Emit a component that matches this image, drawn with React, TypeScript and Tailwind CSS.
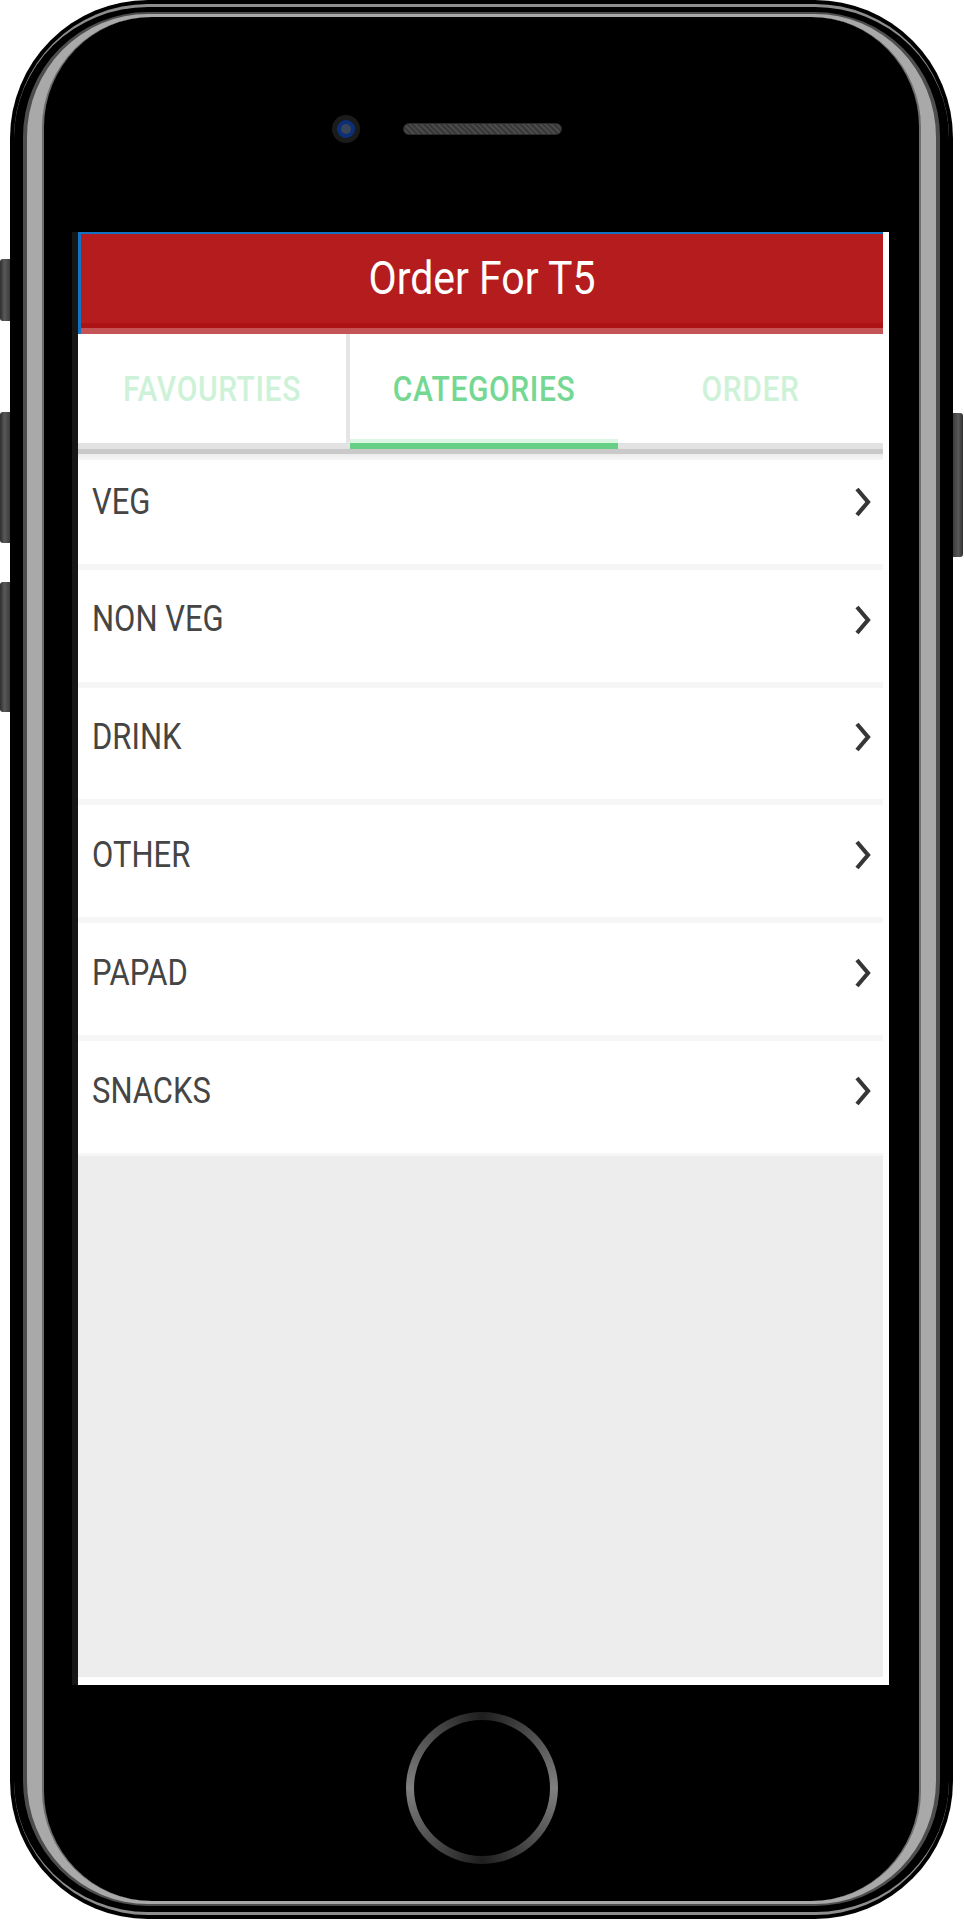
import React from 'react';

const tabs = ['FAVOURTIES', 'CATEGORIES', 'ORDER'];
const categories = ['VEG', 'NON VEG', 'DRINK', 'OTHER', 'PAPAD', 'SNACKS'];

function Chevron() {
  return (
    <svg width="20" height="34" viewBox="0 0 20 34" fill="none">
      <path d="M4 4 L15 17 L4 30" stroke="#363636" strokeWidth="4.2" strokeLinejoin="miter" />
    </svg>
  );
}

function Tabs() {
  return (
    <div className="relative flex h-[115px]">
      <div className="flex w-[272px] items-center justify-center border-b-[6px] border-r-[4px] border-b-[#e2e2e2] border-r-[#e5e5e5] text-[#cdf2d8]">
        <span className="inline-block scale-y-[1.15] text-[30px] font-medium tracking-[0.6px]">{tabs[0]}</span>
      </div>
      <div className="flex w-[268px] items-center justify-center border-b-[6px] border-[#66cf86] text-[#74d892] shadow-[inset_0_-4px_0_#dbf6e3]">
        <span className="inline-block scale-y-[1.15] text-[30px] font-medium tracking-[0.6px]">{tabs[1]}</span>
      </div>
      <div className="flex flex-1 items-center justify-center border-b-[6px] border-[#e2e2e2] text-[#cdf2d8]">
        <span className="inline-block scale-y-[1.15] text-[30px] font-medium tracking-[0.6px]">{tabs[2]}</span>
      </div>
      {/* shadow under the tab bar */}
      <div className="absolute left-0 right-0 top-full z-10 h-[11px] bg-[linear-gradient(to_bottom,#c9c9c9_0px,#c9c9c9_5px,#ebebeb_5px,#f7f7f7_11px)]" />
    </div>
  );
}

function Screen() {
  return (
    <div className="ml-[34px] mt-[89px] flex h-[1453px] w-[811px] flex-col bg-white pb-[8px] pr-[6px] shadow-[-6px_0_0_#161616]">
      <div className="flex flex-col border-l-[3px] border-t-2 border-[#1372c4]">
        <header className="flex h-[89px] items-center justify-center bg-[#b41c1e]">
          <h1 className="inline-block scale-y-[1.12] text-[41px] font-normal text-white">Order For T5</h1>
        </header>
        <div className="h-[5px] bg-[#ad1214]" />
        <div className="h-[6px] bg-[#c55457]" />
      </div>

      <Tabs />

      <ul className="flex flex-col bg-[#f6f6f6]">
        {categories.map((c) => (
          <li
            key={c}
            className="my-[3px] flex h-[111.8px] items-center justify-between bg-white pb-[12px] pl-[14px] pr-[10px]"
          >
            <span className="inline-block scale-y-[1.18] text-[31px] text-[#454545]">{c}</span>
            <Chevron />
          </li>
        ))}
      </ul>

      <div className="flex-1 bg-[#ededed]" />
    </div>
  );
}

export default function App() {
  return (
    <div className="flex h-[1920px] w-[964px] bg-white font-['Roboto',sans-serif]">
      {/* left side buttons */}
      <div className="flex w-[10px] flex-col">
        <div className="mt-[259px] h-[62px] rounded-l-[3px] bg-[linear-gradient(90deg,#2e2e2e,#585858_45%,#3c3c3c)]" />
        <div className="mt-[91px] h-[131px] rounded-l-[3px] bg-[linear-gradient(90deg,#2e2e2e,#585858_45%,#3c3c3c)]" />
        <div className="mt-[39px] h-[130px] rounded-l-[3px] bg-[linear-gradient(90deg,#2e2e2e,#585858_45%,#3c3c3c)]" />
      </div>

      {/* phone body */}
      <div className="h-[1919px] w-[943px] rounded-[138px] bg-black p-[4px]">
        <div className="h-full rounded-[134px] border-y-[3px] border-[#8d8d8d] px-[9px] pb-[6px] pt-[5px]">
          <div className="h-full rounded-[125px] border-x-[4px] border-y-[2px] border-[#4d4d4d] bg-[#a9a9a9] px-[15px] py-[3px]">
            <div className="flex h-full flex-col rounded-[110px] border-x-[2px] border-[#6e6e6e] bg-black">
              {/* camera + speaker */}
              <div className="mt-[98px] flex items-center gap-[43px] pl-[288px]">
                <div className="flex h-[28px] w-[28px] items-center justify-center rounded-full bg-[#1b1b1b]">
                  <div className="flex h-[18px] w-[18px] items-center justify-center rounded-full bg-[#0c2f7a]">
                    <div className="h-[10px] w-[10px] rounded-full bg-[#3b4558]" />
                  </div>
                </div>
                <div className="h-[12px] w-[159px] rounded-full border border-[#2b2b2b] bg-[repeating-linear-gradient(45deg,#383838_0px,#383838_2px,#4a4a4a_2px,#4a4a4a_4px)]" />
              </div>

              <Screen />

              {/* home button */}
              <div className="mt-[27px] flex h-[152px] w-[152px] items-center justify-center self-center rounded-full bg-[conic-gradient(#1e1e1e,#808080,#1e1e1e,#808080,#1e1e1e)]">
                <div className="h-[136px] w-[136px] rounded-full bg-black" />
              </div>
            </div>
          </div>
        </div>
      </div>

      {/* right power button */}
      <div className="flex w-[11px] flex-col">
        <div className="mt-[413px] h-[144px] w-[10px] rounded-r-[3px] bg-[linear-gradient(90deg,#3c3c3c,#585858_55%,#2e2e2e)]" />
      </div>
    </div>
  );
}
